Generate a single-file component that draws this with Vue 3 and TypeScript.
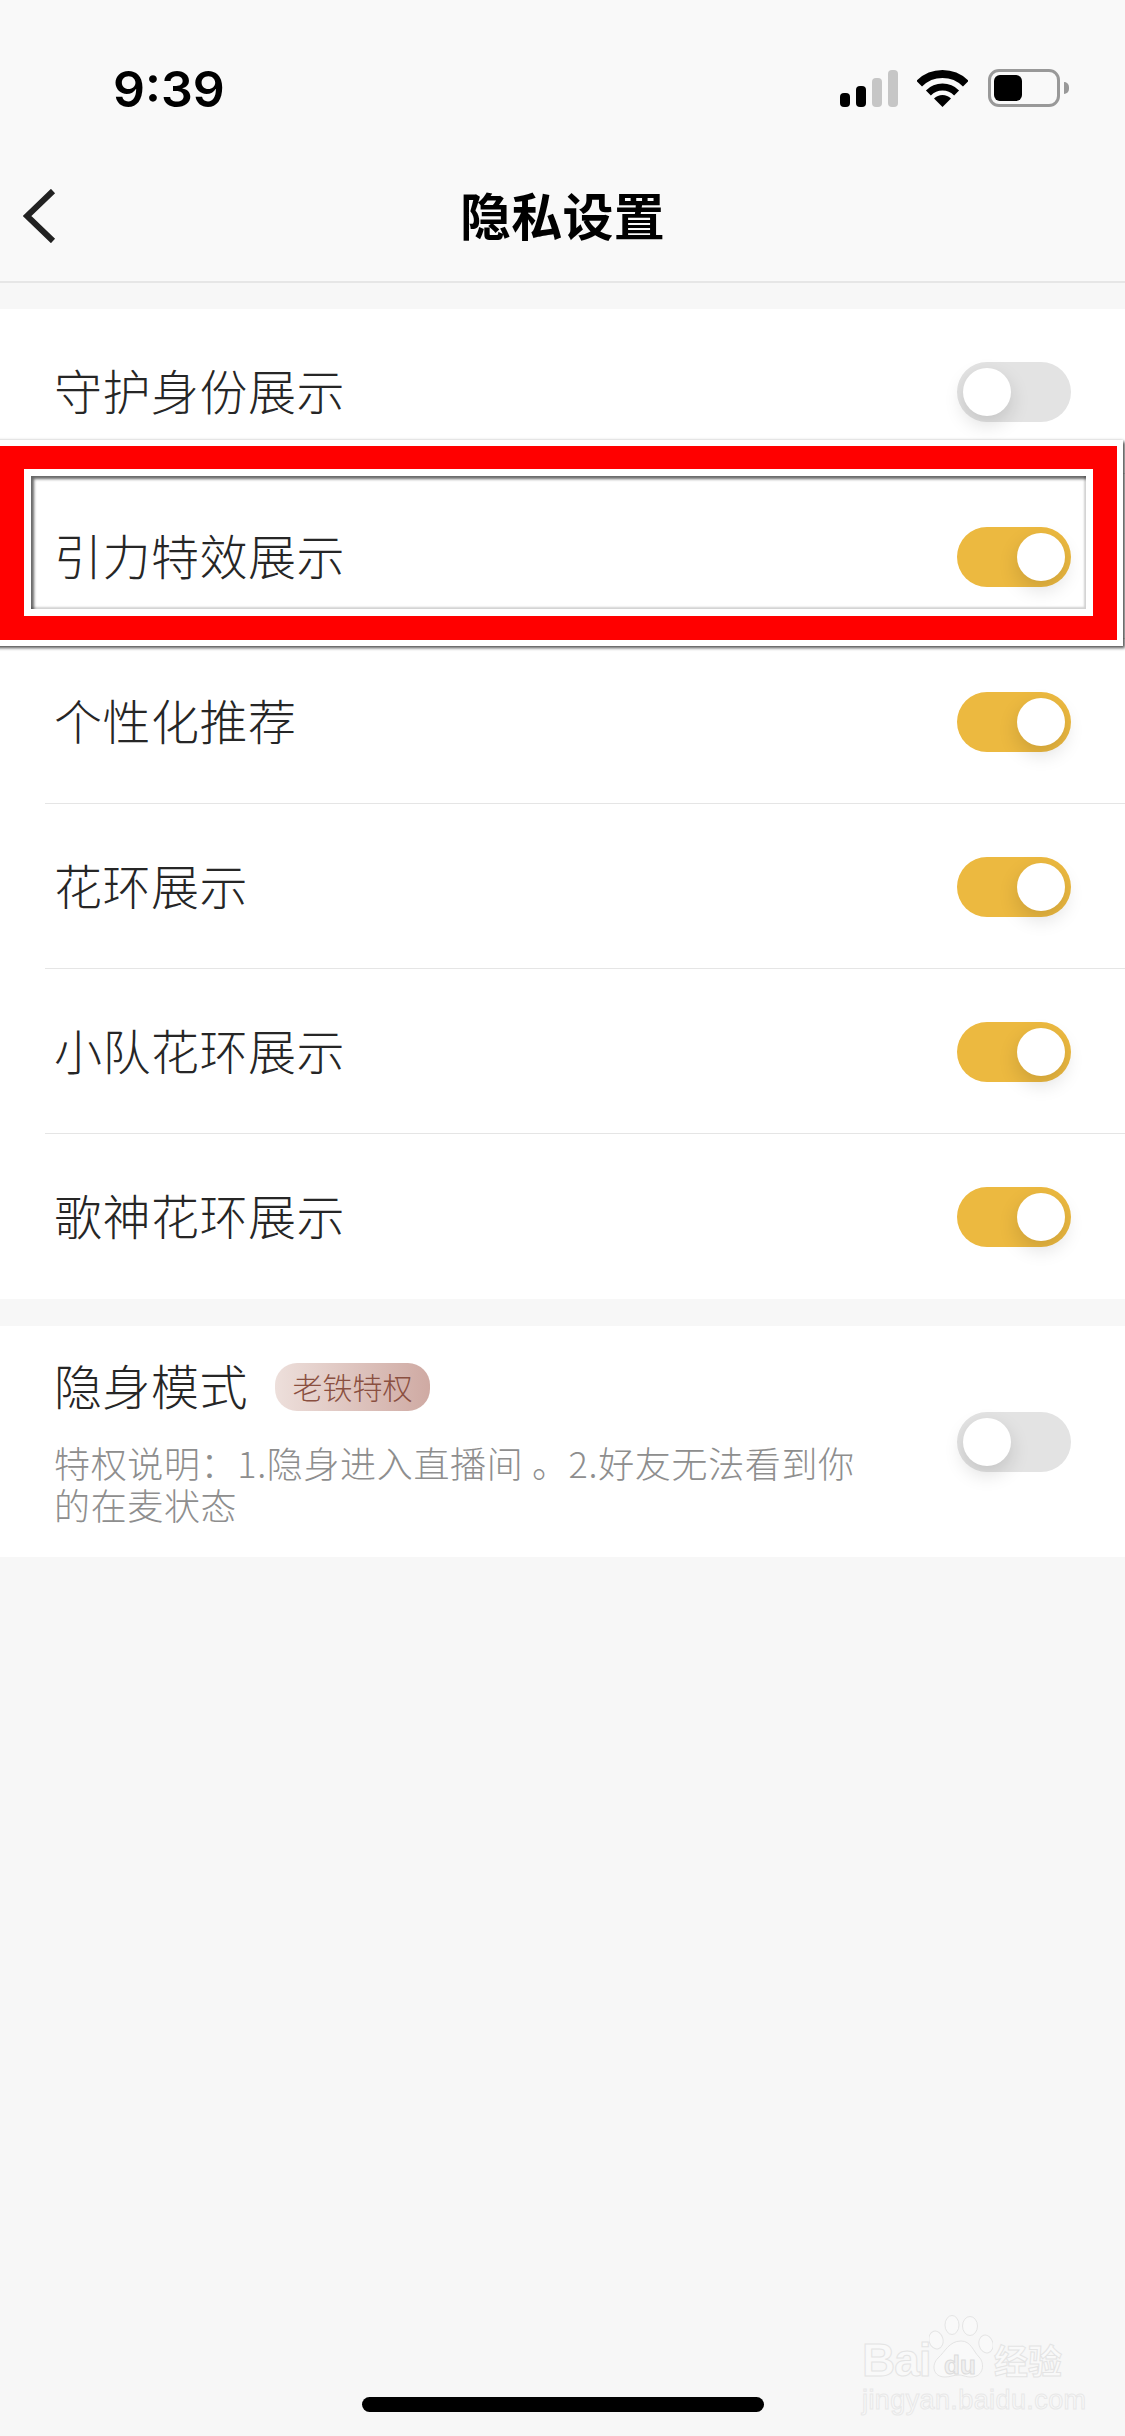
<script setup lang="ts">
import { ref } from 'vue'

interface Row { label: string; on: boolean }

const rows = ref<Row[]>([
  { label: '守护身份展示', on: false },
  { label: '引力特效展示', on: true },
  { label: '个性化推荐', on: true },
  { label: '花环展示', on: true },
  { label: '小队花环展示', on: true },
  { label: '歌神花环展示', on: true },
])
const stealth = ref(false)
</script>

<template>
  <div class="page">
    <header class="header">
      <div class="status">
        <span class="time">9:39</span>
        <div class="status-icons">
          <div class="signal">
            <i class="bar b1"></i><i class="bar b2"></i><i class="bar b3 dim"></i><i class="bar b4 dim"></i>
          </div>
          <svg class="wifi" width="51" height="37" viewBox="0 0 51 37" fill="none">
            <path d="M2.2 13.7A33 33 0 0 1 48.8 13.7" stroke="#000" stroke-width="8" />
            <path d="M11.4 22.9A20 20 0 0 1 39.6 22.9" stroke="#000" stroke-width="7" />
            <path d="M25.5 37L17 28.5A12 12 0 0 1 34 28.5Z" fill="#000" />
          </svg>
          <div class="battery"><div class="battery-fill"></div></div>
          <i class="nub"></i>
        </div>
      </div>
      <div class="nav">
        <svg class="back" width="34" height="54" viewBox="0 0 34 54" fill="none">
          <path d="M30 2L4 27L30 52" stroke="#222" stroke-width="6" />
        </svg>
        <h1 class="title">隐私设置</h1>
      </div>
    </header>

    <section class="list">
      <div v-for="row in rows" :key="row.label" class="row" @click="row.on = !row.on">
        <span class="label">{{ row.label }}</span>
        <span class="toggle" :class="{ on: row.on }"><i class="knob"></i></span>
      </div>
    </section>

    <section class="stealth" @click="stealth = !stealth">
      <div class="stealth-text">
        <div class="stealth-head">
          <span class="label">隐身模式</span>
          <span class="badge">老铁特权</span>
        </div>
        <p class="desc">特权说明：1.隐身进入直播间 。2.好友无法看到你的在麦状态</p>
      </div>
      <span class="toggle" :class="{ on: stealth }"><i class="knob"></i></span>
    </section>

    <div class="annot">
      <div class="annot-red">
        <div class="annot-inner"></div>
      </div>
    </div>

    <div class="watermark">
      <div class="wm-top">
        <span class="wm-bai">Bai</span>
        <div class="wm-paw">
          <svg width="64" height="66" viewBox="0 0 64 66">
            <g fill="#f9f9f9" stroke="#e4e4e4" stroke-width="1">
              <ellipse cx="7" cy="25" rx="7" ry="9" transform="rotate(-15 7 25)" />
              <ellipse cx="23" cy="10" rx="7" ry="9.5" />
              <ellipse cx="41" cy="11" rx="7.5" ry="9.5" />
              <ellipse cx="57" cy="29" rx="7" ry="9" transform="rotate(-15 57 29)" />
              <path d="M32 26C42 26 44 36 50 42C56 48 55 62 42 62C36 62 34 60 30 60C24 60 22 62 16 62C4 62 2 50 9 43C16 37 20 26 32 26Z" />
            </g>
          </svg>
          <span class="wm-du">du</span>
        </div>
        <span class="wm-cn">经验</span>
      </div>
      <div class="wm-url">jingyan.baidu.com</div>
    </div>

    <div class="home"></div>
  </div>
</template>

<style>
html, body { margin: 0; padding: 0; background: #f7f7f7; }
</style>

<style scoped>
.page {
  position: relative;
  width: 1125px;
  height: 2436px;
  overflow: hidden;
  background: #f7f7f7;
  font-family: "Noto Sans CJK SC", "Noto Sans", sans-serif;
  color: #333;
}
.header {
  height: 283px;
  box-sizing: border-box;
  background: #f9f9f9;
  border-bottom: 2px solid #e6e6e6;
}
.status {
  height: 132px;
  box-sizing: border-box;
  padding: 64px 56px 0 113px;
  display: flex;
  justify-content: space-between;
  align-items: flex-start;
}
.time {
  font-family: Inter, "Liberation Sans", sans-serif;
  font-weight: 600;
  font-size: 50px;
  line-height: 50px;
  color: #000;
}
.status-icons {
  display: flex;
  align-items: flex-end;
  height: 38px;
  margin-top: 5px;
}
.signal { display: flex; align-items: flex-end; gap: 6px; height: 37px; }
.bar { display: block; width: 10px; border-radius: 4px; background: #000; }
.b1 { height: 14px; }
.b2 { height: 21px; }
.b3 { height: 29px; }
.b4 { height: 37px; }
.dim { background: #c6c6c6; }
.wifi { margin-left: 19px; display: block; }
.battery {
  margin-left: 20px;
  width: 72px;
  height: 38px;
  box-sizing: border-box;
  border: 3px solid #999;
  border-radius: 11px;
  padding: 3px;
}
.battery-fill { width: 28px; height: 26px; background: #000; border-radius: 6px; }
.nub {
  display: block;
  align-self: center;
  margin-left: 4px;
  width: 5px;
  height: 12px;
  background: #999;
  border-radius: 0 6px 6px 0;
}
.nav {
  position: relative;
  height: 149px;
  display: flex;
  align-items: center;
  justify-content: center;
}
.back { position: absolute; left: 23px; top: 57px; }
.title {
  margin: 15px 0 0;
  font-size: 51px;
  line-height: 70px;
  font-weight: 700;
  letter-spacing: 0.3px;
  color: #000;
}
.list {
  margin-top: 26px;
  background: #fff;
}
.row {
  height: 165px;
  box-sizing: border-box;
  margin-left: 45px;
  padding: 0 54px 0 9px;
  display: flex;
  align-items: center;
  justify-content: space-between;
  border-bottom: 1px solid #e5e5e5;
}
.row:last-child { border-bottom: none; }
.row .toggle { margin-top: 1px; }
.label {
  font-size: 48px;
  line-height: 60px;
  font-weight: 300;
  letter-spacing: 0.5px;
  padding-bottom: 5px;
  color: #262626;
}
.toggle {
  position: relative;
  flex: none;
  display: block;
  width: 114px;
  height: 60px;
  border-radius: 30px;
  background: #e3e3e3;
}
.toggle.on { background: #ecb940; }
.knob {
  position: absolute;
  left: 6px;
  top: 6px;
  width: 48px;
  height: 48px;
  border-radius: 50%;
  background: #fff;
  box-shadow: 0 8px 20px rgba(0, 0, 0, 0.14);
}
.toggle.on .knob { left: 60px; }
.stealth {
  margin-top: 27px;
  height: 231px;
  box-sizing: border-box;
  padding: 36px 54px 32px 54px;
  background: #fff;
  display: flex;
  align-items: center;
  justify-content: space-between;
}
.stealth > .toggle { margin-bottom: 4px; }
.stealth-text { width: 816px; }
.stealth-head { display: flex; align-items: center; height: 48px; }
.badge {
  margin-left: 27px;
  width: 155px;
  height: 48px;
  border-radius: 22px;
  background: linear-gradient(90deg, #eddfdb, #cfaaa3);
  color: #8a4f40;
  font-size: 30px;
  font-weight: 300;
  line-height: 46px;
  text-align: center;
}
.desc {
  margin: 30px 0 0;
  font-size: 36px;
  line-height: 42px;
  font-weight: 300;
  letter-spacing: 0.65px;
  color: #8e8e8e;
}
.annot {
  position: absolute;
  left: -6px;
  right: 2px;
  top: 440px;
  height: 206px;
  box-sizing: border-box;
  border: 6px solid #fff;
  box-shadow: 2px 2px 3px rgba(0, 0, 0, 0.65), 0 0 3px rgba(0, 0, 0, 0.18);
}
.annot-red {
  height: 100%;
  box-sizing: border-box;
  border: 24px solid #f00;
  border-top-width: 23px;
}
.annot-inner {
  height: 100%;
  box-sizing: border-box;
  border: 7px solid #fff;
  position: relative;
}
.annot-inner::after {
  content: "";
  position: absolute;
  inset: 0;
  box-shadow: inset 3px 3px 3px rgba(0, 0, 0, 0.6), inset -2px -2px 2px rgba(0, 0, 0, 0.18);
}
.watermark {
  position: absolute;
  left: 862px;
  top: 2316px;
  width: 205px;
  font-family: "Liberation Sans", "Noto Sans CJK SC", sans-serif;
  color: #f9f9f9;
}
.wm-top { display: flex; align-items: flex-end; height: 64px; }
.wm-bai {
  font-size: 46px;
  line-height: 48px;
  font-weight: 700;
  letter-spacing: -1px;
  -webkit-text-stroke: 1px #e4e4e4;
  width: 68px;
  margin-bottom: -4px;
}
.wm-paw { position: relative; width: 62px; height: 64px; margin-right: 2px; }
.wm-paw svg { position: absolute; left: -1px; top: -1px; }
.wm-du {
  position: absolute;
  left: 14px;
  top: 36px;
  font-size: 26px;
  line-height: 26px;
  font-weight: 700;
  color: #f0f0f0;
  -webkit-text-stroke: 1px #dcdcdc;
}
.wm-cn {
  font-family: "Noto Sans CJK SC", sans-serif;
  font-size: 34px;
  line-height: 40px;
  font-weight: 700;
  -webkit-text-stroke: 1px #e4e4e4;
}
.wm-url {
  margin-top: 4px;
  font-size: 27px;
  line-height: 32px;
  white-space: nowrap;
  letter-spacing: 0.4px;
  -webkit-text-stroke: 1px #e8e8e8;
}
.home {
  position: absolute;
  left: 362px;
  top: 2397px;
  width: 402px;
  height: 15px;
  border-radius: 8px;
  background: #000;
}
</style>
